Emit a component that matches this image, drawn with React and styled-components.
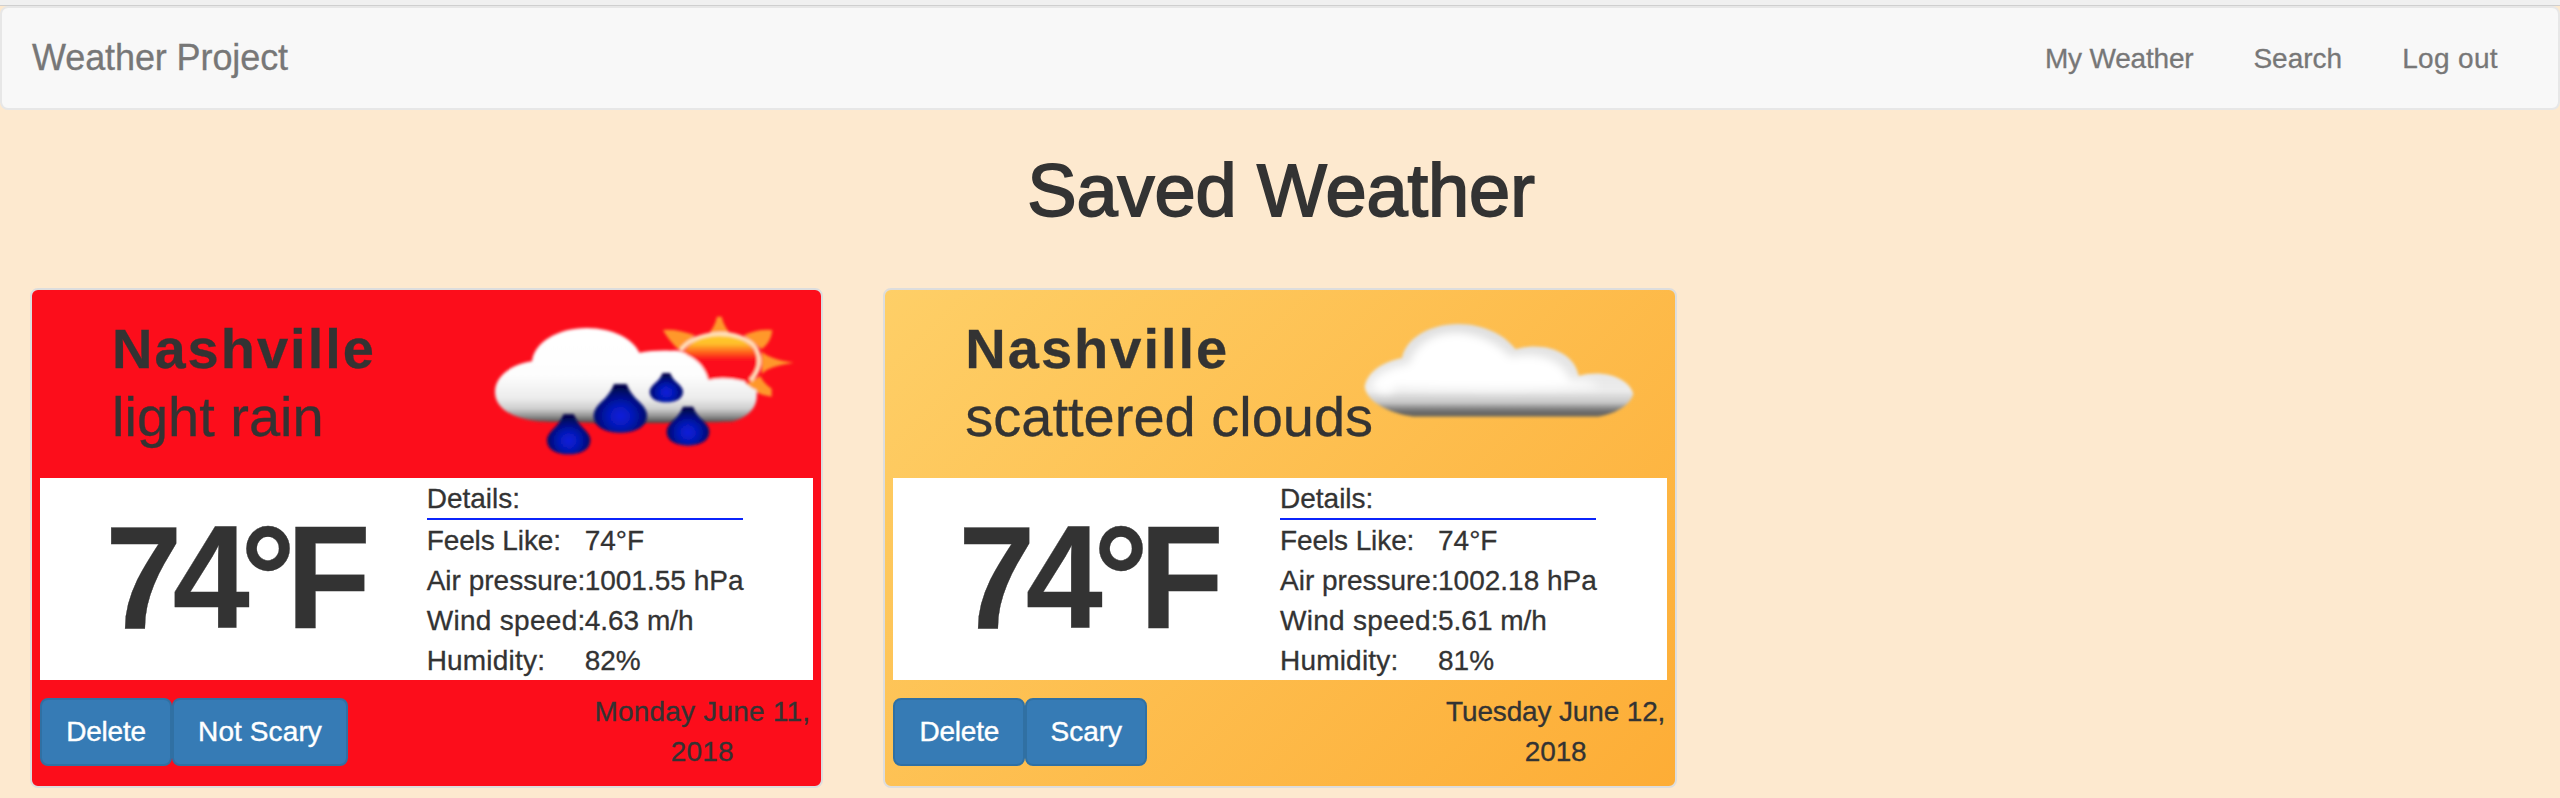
import React from "react";
import styled, { createGlobalStyle } from "styled-components";

const GlobalStyle = createGlobalStyle`
  * { box-sizing: border-box; }
  body {
    margin: 0;
    min-height: 798px;
    overflow: hidden;
    background: #fde9cf;
    color: #333;
    font: 28px/40px "Liberation Sans", Arial, sans-serif;
    -webkit-text-stroke: 0.3px currentColor;
  }
`;

const WindowEdge = styled.div`
  height: 6px;
  background: #f0f0f0;
  border-bottom: 1px solid #cfcfcf;
`;

const Navbar = styled.nav`
  display: flex;
  align-items: center;
  justify-content: space-between;
  height: 104px;
  padding: 0 30px;
  border: 2px solid #e7e7e7;
  border-radius: 8px;
  background: #f8f8f8;
  color: #777;
`;

const Brand = styled.span`
  font-size: 36px;
  letter-spacing: -0.1px;
`;

const NavLinks = styled.div`
  display: flex;
  padding-top: 1px;
`;

const NavLink = styled.a`
  padding: 0 30px;
  letter-spacing: ${(p) => p.$track || 0}px;
`;

const Title = styled.h1`
  margin: 41px 0 57px;
  padding-left: 2px;
  font-size: 74px;
  font-weight: 400;
  line-height: 80px;
  text-align: center;
  letter-spacing: -0.1px;
  -webkit-text-stroke: 1.8px #333;
`;

const CardGrid = styled.main`
  display: grid;
  grid-template-columns: repeat(3, minmax(0, 1fr));
  gap: 60px;
  padding: 0 30px;
`;

const Card = styled.section`
  height: 500px;
  padding: 0 8px;
  border: 2px solid #ddd;
  border-radius: 8px;
  background: ${(p) => p.$background};
`;

const CardHeader = styled.header`
  display: flex;
  height: 188px;
`;

const Place = styled.div`
  flex: 0 0 50%;
  min-width: 0;
  padding: 25px 0 0 72px;
  font-size: 56px;
  line-height: 68px;
  white-space: nowrap;
`;

const City = styled.div`
  font-weight: 700;
  letter-spacing: 2px;
`;

const WeatherIcon = styled.svg`
  flex: none;
  width: 313.33px;
  height: 153.33px;
  margin: 20px 0 0 60px;
`;

const Readings = styled.div`
  display: grid;
  grid-template-columns: repeat(2, minmax(0, 1fr));
  height: 202px;
  background: #fff;
`;

const Temperature = styled.div`
  padding-top: 20px;
  text-align: center;
  font-size: 146px;
  font-weight: 700;
  line-height: 160px;
  letter-spacing: -10px;
  transform: scaleX(0.948);
`;

const Details = styled.div`
  width: 316px;
  line-height: 41px;
`;

const DetailsHeading = styled.div`
  height: 42px;
  border-bottom: 2px solid #0b24fb;
`;

const DetailRow = styled.div`
  display: grid;
  grid-template-columns: 158px 1fr;
  height: 40px;
  white-space: nowrap;
`;

const DetailLabel = styled.span`
  letter-spacing: ${(p) => p.$track}px;
`;

const CardFooter = styled.footer`
  display: flex;
  justify-content: space-between;
  padding-top: 12px;
`;

const Actions = styled.div`
  display: flex;
  align-items: flex-start;
  padding-top: 6px;
`;

const Button = styled.button`
  width: ${(p) => p.$width}px;
  height: 68px;
  padding: 0;
  border: 2px solid #3070a3;
  border-radius: 8px;
  background: #367bb5;
  color: #fff;
  font: inherit;
  letter-spacing: ${(p) => p.$track || 0}px;
  -webkit-text-stroke: 0.4px #fff;
`;

const SavedDate = styled.div`
  width: 222px;
  text-align: center;
  white-space: nowrap;
  letter-spacing: ${(p) => p.$track}px;
`;

function Drop({ x, tip, bottom, half }) {
  const h = bottom - tip;
  const belly = bottom - h * 0.36;
  const point = h * 0.13;
  return (
    <path
      fill="url(#drop)"
      d={`M${x - point} ${tip} H${x + point} Q${x + h * 0.2} ${tip + h * 0.2} ${x + half * 0.72} ${tip + h * 0.37} Q${x + half} ${belly - h * 0.12} ${x + half} ${belly} C${x + half} ${bottom - h * 0.1} ${x + half * 0.5} ${bottom} ${x} ${bottom} C${x - half * 0.5} ${bottom} ${x - half} ${bottom - h * 0.1} ${x - half} ${belly} Q${x - half} ${belly - h * 0.12} ${x - half * 0.72} ${tip + h * 0.37} Q${x - h * 0.2} ${tip + h * 0.2} ${x - point} ${tip}Z`}
    />
  );
}

function RainIcon() {
  return (
    <WeatherIcon viewBox="80 90 940 460" aria-label="light rain">
      <defs>
        <filter id="soft" x="-10%" y="-10%" width="120%" height="120%">
          <feGaussianBlur stdDeviation="5" />
        </filter>
        <linearGradient id="rainCloud" gradientUnits="userSpaceOnUse" x1="0" y1="145" x2="0" y2="428">
          <stop offset="0" stopColor="#fff" />
          <stop offset=".5" stopColor="#fdfdfd" />
          <stop offset=".74" stopColor="#ececec" />
          <stop offset=".85" stopColor="#cfcfcf" />
          <stop offset=".93" stopColor="#929292" />
          <stop offset="1" stopColor="#4a4a4a" />
        </linearGradient>
        <linearGradient id="sunFill" gradientUnits="userSpaceOnUse" x1="0" y1="165" x2="0" y2="240">
          <stop offset="0" stopColor="#ffc928" />
          <stop offset=".35" stopColor="#ffc02a" />
          <stop offset=".6" stopColor="#ff7a20" />
          <stop offset="1" stopColor="#fc0d1b" />
        </linearGradient>
        <radialGradient id="drop" cx=".5" cy=".66" r=".58">
          <stop offset="0" stopColor="#081fdc" />
          <stop offset=".4" stopColor="#0618b8" />
          <stop offset=".85" stopColor="#04096c" />
          <stop offset="1" stopColor="#06064c" />
        </radialGradient>
      </defs>
      <g filter="url(#soft)">
        <path
          fill="#ff982c"
          d="M736 172 Q764 142 770 110 H784 Q790 142 820 172Z M608 150 Q650 146 704 166 L656 210 Q624 180 608 150Z M936 150 Q933 186 904 208 L850 166 Q890 146 936 150Z M904 214 Q925 238 1000 248 Q925 258 904 282Z M852 315 L900 288 Q910 310 934 326 V350 Q890 345 852 315Z"
        />
        <ellipse cx="778" cy="247" rx="117" ry="83" fill="url(#sunFill)" />
        <path d="M661 212 C700 150 840 142 887 205 C902 235 900 270 870 302" fill="none" stroke="#ffe2bd" strokeWidth="12" />
        <path
          fill="url(#rainCloud)"
          d="M104 335 C104 288 155 252 215 244 C222 188 290 144 380 144 C458 144 520 178 537 218 C565 213 600 210 632 212 Q665 210 682 226 C715 240 737 270 744 300 Q790 288 852 304 Q865 322 888 330 C895 375 875 405 820 424 C780 430 300 432 230 424 C160 414 104 388 104 335Z"
        />
      </g>
      <g filter="url(#soft)">
        <Drop x={480} tip={312} bottom={458} half={80} />
        <Drop x={618} tip={279} bottom={367} half={50} />
        <Drop x={325} tip={403} bottom={523} half={65} />
        <Drop x={683} tip={380} bottom={497} half={64} />
      </g>
    </WeatherIcon>
  );
}

function CloudIcon() {
  return (
    <WeatherIcon viewBox="0 90 940 460" aria-label="scattered clouds">
      <defs>
        <filter id="cloudSoft" x="-10%" y="-10%" width="120%" height="120%">
          <feGaussianBlur stdDeviation="5" />
        </filter>
        <filter id="highlightSoft" x="-20%" y="-20%" width="140%" height="140%">
          <feGaussianBlur stdDeviation="13" />
        </filter>
        <linearGradient id="cloudFill" gradientUnits="userSpaceOnUse" x1="0" y1="130" x2="0" y2="410">
          <stop offset="0" stopColor="#dedede" />
          <stop offset=".5" stopColor="#e6e6e6" />
          <stop offset=".72" stopColor="#ececec" />
          <stop offset=".85" stopColor="#c6c6c6" />
          <stop offset=".91" stopColor="#888" />
          <stop offset=".96" stopColor="#646464" />
          <stop offset="1" stopColor="#77705f" />
        </linearGradient>
      </defs>
      <path
        filter="url(#cloudSoft)"
        fill="url(#cloudFill)"
        d="M74 320 C82 275 130 245 186 234 C196 178 265 132 355 132 C430 132 495 165 527 208 C610 182 705 215 716 288 C790 266 870 295 880 342 C870 375 830 400 775 410 H220 C155 400 82 370 74 320Z"
      />
      <path
        filter="url(#highlightSoft)"
        fill="#fff"
        d="M94 318 C102 285 150 262 208 252 C226 190 285 156 350 158 C410 158 475 190 512 232 C590 212 675 240 690 304 C730 298 760 306 780 320 L690 324 C560 330 300 330 170 322 C140 360 100 330 94 318Z"
      />
    </WeatherIcon>
  );
}

const forecasts = [
  {
    city: "Nashville",
    sky: "light rain",
    Icon: RainIcon,
    background: "#fc0d1b",
    details: [
      ["Feels Like:", "74°F", -0.1],
      ["Air pressure:", "1001.55 hPa", 0],
      ["Wind speed:", "4.63 m/h", 0.3],
      ["Humidity:", "82%", 0.2],
    ],
    action: { label: "Not Scary", width: 176, track: 0.1 },
    day: { label: "Monday June 11,", track: 0.2 },
  },
  {
    city: "Nashville",
    sky: "scattered clouds",
    Icon: CloudIcon,
    background: "linear-gradient(135deg, #fecf67, #fdad36)",
    details: [
      ["Feels Like:", "74°F", -0.1],
      ["Air pressure:", "1002.18 hPa", 0],
      ["Wind speed:", "5.61 m/h", 0.3],
      ["Humidity:", "81%", 0.2],
    ],
    action: { label: "Scary", width: 122, track: 0 },
    day: { label: "Tuesday June 12,", track: -0.15 },
  },
];

function ForecastCard({ city, sky, Icon, background, details, action, day }) {
  return (
    <Card $background={background}>
      <CardHeader>
        <Place>
          <City>{city}</City>
          <div>{sky}</div>
        </Place>
        <Icon />
      </CardHeader>
      <Readings>
        <Temperature>74°F</Temperature>
        <Details>
          <DetailsHeading>Details:</DetailsHeading>
          {details.map(([label, value, track]) => (
            <DetailRow key={label}>
              <DetailLabel $track={track}>{label}</DetailLabel>
              <span>{value}</span>
            </DetailRow>
          ))}
        </Details>
      </Readings>
      <CardFooter>
        <Actions>
          <Button $width={132} $track={-0.2}>Delete</Button>
          <Button $width={action.width} $track={action.track}>{action.label}</Button>
        </Actions>
        <SavedDate $track={day.track}>
          {day.label}
          <br />
          2018
        </SavedDate>
      </CardFooter>
    </Card>
  );
}

export default function App() {
  return (
    <>
      <GlobalStyle />
      <WindowEdge />
      <Navbar>
        <Brand>Weather Project</Brand>
        <NavLinks>
          <NavLink $track={-0.2}>My Weather</NavLink>
          <NavLink>Search</NavLink>
          <NavLink $track={0.35}>Log out</NavLink>
        </NavLinks>
      </Navbar>
      <Title>Saved Weather</Title>
      <CardGrid>
        {forecasts.map((f) => (
          <ForecastCard key={f.sky} {...f} />
        ))}
      </CardGrid>
    </>
  );
}
